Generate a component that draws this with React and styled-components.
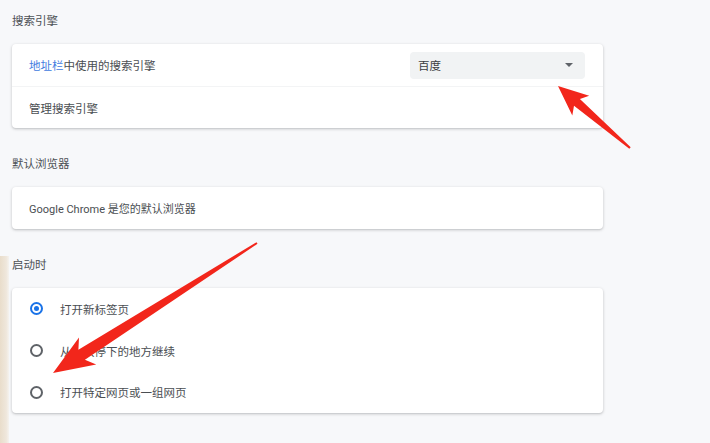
import React from 'react';
import styled, { createGlobalStyle } from 'styled-components';

const Global = createGlobalStyle`
  html, body {
    margin: 0;
    padding: 0;
    background: #f7f8fa;
  }
  body {
    font-family: Roboto, "Noto Sans CJK SC", sans-serif;
    color: #3c4043;
  }
`;

const Page = styled.div`
  position: relative;
  width: 710px;
  height: 443px;
  overflow: hidden;
  box-sizing: border-box;
  padding: 11px 0 0 12px;
  display: flex;
  flex-direction: column;
  gap: 26px;
`;

const Section = styled.section`
  width: 591px;
  display: flex;
  flex-direction: column;
`;

const Heading = styled.div`
  font-size: 11.5px;
  line-height: 20px;
  color: #4d5156;
  margin-bottom: 13px;
`;

const Card = styled.div`
  background: #fff;
  border-radius: 4px;
  box-shadow: 0 1px 2px rgba(60, 64, 67, 0.22), 0 1px 3px 1px rgba(60, 64, 67, 0.08);
  display: flex;
  flex-direction: column;
`;

const Row = styled.div`
  height: 42px;
  box-sizing: border-box;
  padding: 0 18px 0 17px;
  display: flex;
  align-items: center;
  justify-content: space-between;
  font-size: ${p => p.size || 11.5}px;
  color: #4a4e52;
  border-top: ${p => (p.divider ? '1px solid #f3f4f5' : 'none')};
`;

const Link = styled.span`
  color: #3f7be0;
`;

const Select = styled.div`
  width: 175px;
  height: 27px;
  box-sizing: border-box;
  border-radius: 4px;
  background: #f1f3f4;
  padding: 0 8px;
  display: flex;
  align-items: center;
  justify-content: space-between;
  font-size: 11.5px;
  color: #3c4043;
`;

const Caret = styled.span`
  width: 0;
  height: 0;
  border-left: 4px solid transparent;
  border-right: 4px solid transparent;
  border-top: 4px solid #5f6368;
  margin-right: 4px;
`;

const RadioRow = styled.div`
  height: 41.7px;
  display: flex;
  align-items: center;
  padding-left: 18px;
  gap: 17px;
  font-size: 11.5px;
  color: #4a4e52;
`;

const Radio = styled.span`
  width: 13px;
  height: 13px;
  box-sizing: border-box;
  border-radius: 50%;
  border: 2px solid ${p => (p.checked ? '#1a73e8' : '#5f6368')};
  display: flex;
  align-items: center;
  justify-content: center;
  &::after {
    content: '';
    width: 5px;
    height: 5px;
    border-radius: 50%;
    background: ${p => (p.checked ? '#1a73e8' : 'transparent')};
  }
`;

const EdgeStrip = styled.div`
  position: absolute;
  left: 0;
  top: 256px;
  bottom: 0;
  width: 9px;
  background: linear-gradient(90deg, #e9ddcb 0%, #efe7dc 70%, #f5f3ef 100%);
`;

const Overlay = styled.svg`
  position: absolute;
  left: 0;
  top: 0;
  pointer-events: none;
`;

function arrowPoints(tip, tail, headLen, barbLen, headHalf, neck, tailW) {
  const dx = tail[0] - tip[0];
  const dy = tail[1] - tip[1];
  const len = Math.hypot(dx, dy);
  const u = [dx / len, dy / len];
  const p = [-u[1], u[0]];
  const at = (d, s) => [tip[0] + u[0] * d + p[0] * s, tip[1] + u[1] * d + p[1] * s];
  const pts = [
    tip,
    at(barbLen, headHalf),
    at(headLen, neck),
    [tail[0] + p[0] * tailW, tail[1] + p[1] * tailW],
    [tail[0] - p[0] * tailW, tail[1] - p[1] * tailW],
    at(headLen, -neck),
    at(barbLen, -headHalf),
  ];
  return pts.map(q => q[0].toFixed(1) + ',' + q[1].toFixed(1)).join(' ');
}

const startup = [
  { label: '打开新标签页', checked: true },
  { label: '从上次停下的地方继续', checked: false },
  { label: '打开特定网页或一组网页', checked: false },
];

export default function App() {
  return (
    <>
      <Global />
      <Page>
        <Section>
          <Heading>搜索引擎</Heading>
          <Card>
            <Row>
              <span>
                <Link>地址栏</Link>中使用的搜索引擎
              </span>
              <Select>
                <span>百度</span>
                <Caret />
              </Select>
            </Row>
            <Row divider>管理搜索引擎</Row>
          </Card>
        </Section>

        <Section>
          <Heading>默认浏览器</Heading>
          <Card>
            <Row size={11}>Google Chrome 是您的默认浏览器</Row>
          </Card>
        </Section>

        <Section>
          <Heading>启动时</Heading>
          <Card>
            {startup.map(item => (
              <RadioRow key={item.label}>
                <Radio checked={item.checked} />
                <span>{item.label}</span>
              </RadioRow>
            ))}
          </Card>
        </Section>

        <EdgeStrip />
        <Overlay width="710" height="443" viewBox="0 0 710 443">
          <polygon fill="#f2261b" points={arrowPoints([558, 86], [630, 148], 25, 30, 13, 4.5, 1)} />
          <polygon fill="#f2261b" points={arrowPoints([53, 373], [257, 243], 34, 41, 16, 6, 1)} />
        </Overlay>
      </Page>
    </>
  );
}
